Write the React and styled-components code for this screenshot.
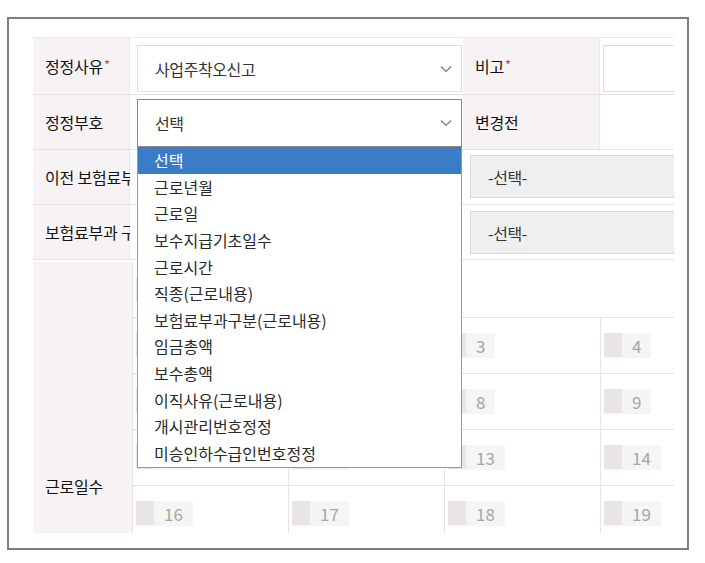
import styled, { createGlobalStyle } from "styled-components";

const GlobalStyle = createGlobalStyle`
  body {
    margin: 0;
    background: #fff;
    font-family: "Noto Sans CJK KR", "Noto Sans", sans-serif;
  }
`;

const options = [
  "선택",
  "근로년월",
  "근로일",
  "보수지급기초일수",
  "근로시간",
  "직종(근로내용)",
  "보험료부과구분(근로내용)",
  "임금총액",
  "보수총액",
  "이직사유(근로내용)",
  "개시관리번호정정",
  "미승인하수급인번호정정",
];

const dayRows = [
  [1, 2, 3, 4, 5],
  [6, 7, 8, 9, 10],
  [11, 12, 13, 14, 15],
  [16, 17, 18, 19, 20],
  [21, 22, 23, 24, 25],
  [26, 27, 28, 29, 30],
  [31],
];

const Chevron = () => (
  <svg width="12" height="8" viewBox="0 0 12 8">
    <polyline points="1,1.5 6,6.5 11,1.5" fill="none" stroke="#7a7a7a" strokeWidth="1.2" />
  </svg>
);

const App = () => {
  return (
    <>
      <GlobalStyle />
      <Frame>
        <Viewport>
          <FormGrid>
            <Label>
              정정사유<Req>*</Req>
            </Label>
            <Field>
              <Select>
                <span>사업주착오신고</span>
                <Chevron />
              </Select>
            </Field>
            <Label>
              비고<Req>*</Req>
            </Label>
            <Field $tight>
              <Input />
            </Field>

            <Label>정정부호</Label>
            <Field $top={4}>
              <SelectWrap>
                <Select $open>
                  <span>선택</span>
                  <Chevron />
                </Select>
                <Dropdown>
                  {options.map((o, i) => (
                    <Option key={o} $active={i === 0}>
                      {o}
                    </Option>
                  ))}
                </Dropdown>
              </SelectWrap>
            </Field>
            <Label>변경전</Label>
            <Field />

            <Label>이전 보험료부과구분</Label>
            <Field />
            <Field $span $top={5}>
              <GraySelect>-선택-</GraySelect>
            </Field>

            <Label>보험료부과 구분</Label>
            <Field />
            <Field $span $top={6}>
              <GraySelect>-선택-</GraySelect>
            </Field>
          </FormGrid>

          <DayGrid>
            <DayLabel>근로일수</DayLabel>
            <DayCell $wide>
              <Check />
            </DayCell>
            {dayRows.map((row) =>
              [0, 1, 2, 3, 4].map((c) => (
                <DayCell key={`${row[0]}-${c}`}>
                  {row[c] && (
                    <Day>
                      <Check />
                      <Num>{row[c]}</Num>
                    </Day>
                  )}
                </DayCell>
              ))
            )}
          </DayGrid>
        </Viewport>
      </Frame>
    </>
  );
};

const Frame = styled.div`
  box-sizing: border-box;
  margin: 17px 0 0 7px;
  width: 682px;
  height: 533px;
  border: 2px solid #7d7d7d;
  padding: 18px 13px 15px 24px;
  background: #fff;
`;

const Viewport = styled.div`
  width: 100%;
  height: 100%;
  overflow: hidden;
`;

const FormGrid = styled.div`
  display: grid;
  grid-template-columns: 97px 333px 137px 260px;
  grid-template-rows: 57px 55px 55px 55px;
  width: max-content;
  border-top: 1px solid #ece8ea;
`;

const Label = styled.div`
  box-sizing: border-box;
  display: flex;
  align-items: center;
  padding-left: 12px;
  background: #f7f3f5;
  border-bottom: 1px solid #e6e1e4;
  border-right: 1px solid #ebe6e9;
  font-size: 16px;
  letter-spacing: -0.2px;
  color: #111;
  white-space: nowrap;
`;

const Req = styled.span`
  color: #c8413f;
  font-size: 13px;
  align-self: flex-start;
  margin-top: 17px;
  margin-left: 1px;
`;

const Field = styled.div`
  box-sizing: border-box;
  display: flex;
  padding: ${(p) => p.$top ?? 7}px 1px 3px ${(p) => (p.$tight ? 3 : 7)}px;
  border-bottom: 1px solid #e6e1e4;
  grid-column: ${(p) => (p.$span ? "span 2" : "auto")};
  background: #fff;
`;

const SelectWrap = styled.div`
  position: relative;
  flex: 1;
  display: flex;
`;

const Select = styled.div`
  box-sizing: border-box;
  flex: 1;
  height: ${(p) => (p.$open ? 48 : 47)}px;
  display: flex;
  align-items: center;
  justify-content: space-between;
  padding: 0 9px 0 17px;
  border: 1px solid ${(p) => (p.$open ? "#8a8a8a" : "#dcdcdc")};
  border-bottom-color: ${(p) => (p.$open ? "#8a8a8a" : "#e4e4e4")};
  background: #fff;
  font-size: 16px;
  letter-spacing: -0.4px;
  color: #333;
`;

const Input = styled.div`
  box-sizing: border-box;
  flex: 1;
  height: 47px;
  border: 1px solid #dcdcdc;
  background: #fff;
`;

const Dropdown = styled.ul`
  position: absolute;
  top: 48px;
  left: 0;
  width: 325px;
  box-sizing: border-box;
  margin: 0;
  padding: 0;
  list-style: none;
  background: #fff;
  border: 1px solid #7f9bc9;
  border-top: none;
  z-index: 5;
`;

const Option = styled.li`
  height: 26.65px;
  line-height: 26px;
  padding-left: 16px;
  font-size: 16px;
  color: ${(p) => (p.$active ? "#fff" : "#2a2a2a")};
  background: ${(p) => (p.$active ? "#3b7cc6" : "transparent")};
  white-space: nowrap;
`;

const GraySelect = styled.div`
  box-sizing: border-box;
  flex: 1;
  height: 43px;
  display: flex;
  align-items: center;
  padding-left: 17px;
  background: #efefef;
  border: 1px solid #d9d9d9;
  font-size: 16px;
  letter-spacing: -0.4px;
  color: #333;
`;

const DayGrid = styled.div`
  display: grid;
  grid-template-columns: 100px repeat(5, 156px);
  grid-auto-rows: 56px;
  width: max-content;
  margin-top: 2px;
`;

const DayLabel = styled.div`
  grid-row: span 8;
  display: flex;
  align-items: center;
  padding-left: 12px;
  background: #f7f3f5;
  border-right: 1px solid #e6e1e4;
  font-size: 16px;
  letter-spacing: -0.2px;
  color: #111;
`;

const DayCell = styled.div`
  box-sizing: border-box;
  display: flex;
  align-items: center;
  padding-left: 3px;
  border-bottom: 1px solid #e2e2e2;
  border-right: ${(p) => (p.$wide ? "none" : "1px solid #e6e6e6")};
  grid-column: ${(p) => (p.$wide ? "span 5" : "auto")};
`;

const Day = styled.div`
  display: flex;
  align-items: stretch;
  height: 25px;
  background: #f5f5f5;
`;

const Check = styled.span`
  display: block;
  width: 18px;
  height: 24px;
  background: #e9e5e7;
`;

const Num = styled.span`
  padding: 0 10px;
  font-family: "Liberation Sans Narrow", "Noto Sans CJK KR", sans-serif;
  font-size: 17px;
  line-height: 25px;
  color: #a6a6a6;
`;

export default App;
